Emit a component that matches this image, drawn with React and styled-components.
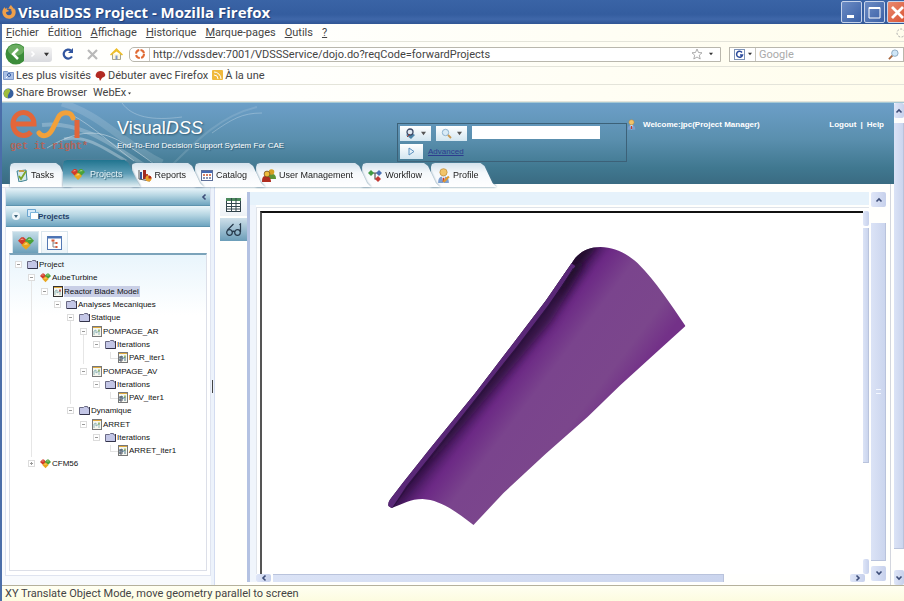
import React, { useState } from "react";
import styled, { createGlobalStyle, css } from "styled-components";
import { FaFirefoxBrowser } from "react-icons/fa";

const GlobalStyle = createGlobalStyle`
  * {
    box-sizing: border-box;
  }

  body {
    margin: 0;
    overflow: hidden;
    background-color: #fffffd;
    font-family: "Liberation Sans", Arial, sans-serif;
  }

  button, input {
    font-family: inherit;
    padding: 0;
    margin: 0;
    border: none;
    background: none;
  }

  ul {
    list-style: none;
    margin: 0;
    padding: 0;
  }

  a {
    color: inherit;
    text-decoration: none;
  }

  svg {
    display: block;
    flex-shrink: 0;
  }
`;

/* ---------- browser window ---------- */

const SCWindow = styled.div`
  min-height: 100vh;
  display: flex;
  flex-direction: column;
  border-left: 2px solid #4b6ea9;
`;

const SCTitleBar = styled.header`
  height: 24px;
  margin-left: -2px;
  display: flex;
  align-items: center;
  gap: 2px;
  padding-left: 2px;
  background: linear-gradient(#3a64a6, #345d9f 60%, #3f67a9 80%, #2f5594);
  overflow: hidden;
`;

const SCTitle = styled.h1`
  flex: 1;
  margin: 0;
  font-family: "Open Sans", sans-serif;
  font-size: 15px;
  font-weight: 700;
  line-height: 22px;
  color: #fff;
  white-space: nowrap;
  text-shadow: 1px 1px 1px #1f3f78;
`;

const SCWindowButtons = styled.div`
  display: flex;
  gap: 2px;
  margin-right: -4px;
`;

const SCWindowButton = styled.button`
  width: 21px;
  height: 22px;
  display: grid;
  place-items: center;
  border: 1px solid #c6d3ea;
  border-radius: 2px;
  background: ${(props) =>
    props.$close
      ? "linear-gradient(135deg, #e88a70, #d9502f)"
      : "linear-gradient(135deg, #6c8cc4, #3a60a6)"};
`;

const SCChrome = styled.div`
  font-family: Roboto, sans-serif;
  font-size: 11px;
  line-height: 16px;
  color: #444;
  background: linear-gradient(100deg, #fffffd 30%, #fffdec);
  white-space: nowrap;
`;

const SCBar = styled.div`
  display: flex;
  align-items: center;
  height: ${(props) => props.$height || 18}px;
  gap: ${(props) => props.$gap || 3}px;
  padding-left: ${(props) => props.$left || 1}px;
  border-bottom: 1px solid #e4e4da;
  overflow: hidden;
`;

const SCSpacer = styled.span`
  flex: 1;
`;

const SCGap = styled.span`
  flex: 0 0 2px;
`;

const SCBarLink = styled.a`
  display: flex;
  align-items: center;
  gap: 2px;
`;

const SCIconButton = styled.button`
  display: grid;
  place-items: center;
  height: 22px;
  width: ${(props) => props.$width || 20}px;
`;

const SCHistory = styled.div`
  display: flex;
  align-items: center;
  width: 50px;
  height: 22px;
`;

const SCForward = styled.button`
  display: flex;
  align-items: center;
  justify-content: space-between;
  width: 28px;
  height: 15px;
  margin-left: -3px;
  padding: 0 3px 0 5px;
  border-radius: 0 3px 3px 0;
  background: linear-gradient(#f4f4f4, #d9dade);
`;

const SCField = styled.label`
  display: flex;
  align-items: center;
  height: 15px;
  flex: ${(props) => props.$grow} 1 0;
  min-width: 0;
  gap: 3px;
  padding: 0 4px;
  border: 1px solid #b9b7ad;
  border-radius: ${(props) => (props.$round ? "5px 0 0 5px" : "0")};
  background-color: #fff;
`;

const SCFieldInput = styled.input`
  flex: 1;
  min-width: 0;
  height: 13px;
  padding-left: 3px;
  border-left: 1px solid #c9c7be;
  font-size: 11px;
  color: #444;
  outline: none;

  &::placeholder {
    color: #aaa;
    opacity: 1;
  }
`;

const SCStatusBar = styled.footer`
  height: 16px;
  padding-left: 3px;
  border-top: 1px solid #b5b19c;
  background: linear-gradient(#fffff2, #fdfce0);
  font-family: Roboto, sans-serif;
  font-size: 11px;
  line-height: 15px;
  color: #444;
`;

const SCViewport = styled.div`
  flex: 1;
  display: flex;
  border-top: 1px solid #a5c8d4;
  min-height: 0;
`;

const SCPage = styled.div`
  flex: 1;
  min-width: 0;
  display: flex;
  flex-direction: column;
`;

/* ---------- application header ---------- */

const SCHeader = styled.header`
  position: relative;
  height: 81px;
  display: flex;
  flex-direction: column;
  justify-content: space-between;
  background: linear-gradient(#6c9fc8, #5a8fae 45%, #407890 80%, #3a6b82);
  color: #fff;
`;

const SCSwoosh = styled.svg`
  position: absolute;
  top: 0;
  left: 0;
`;

const SCHeaderTop = styled.div`
  position: relative;
  height: 57px;
  display: flex;
  align-items: flex-start;
  padding-left: 8px;
`;

const SCBrand = styled.div`
  width: 107px;
  padding-top: 5px;
`;

const SCTagline = styled.p`
  margin: 0;
  font-family: "Liberation Mono", monospace;
  font-size: 10px;
  font-weight: 700;
  line-height: 14px;
  color: #b0655a;
`;

const SCProduct = styled.div`
  width: 280px;
  padding-top: 13px;
`;

const SCProductName = styled.h2`
  margin: 0;
  font-size: 18px;
  font-weight: 400;
  line-height: 24px;
  text-shadow: 1px 1px 2px #2d5a72;
`;

const SCProductNote = styled.p`
  margin: 0;
  font-size: 8px;
  line-height: 12px;
  text-shadow: 1px 1px 1px #2d5a72;
`;

const SCSearch = styled.form`
  width: 230px;
  height: 39px;
  margin-top: 20px;
  padding: 2px;
  display: flex;
  flex-wrap: wrap;
  align-items: flex-start;
  gap: 3px 5px;
  border: 1px solid #3c6178;
`;

const SCSearchButton = styled.button`
  width: ${(props) => props.$width || 31}px;
  height: 15px;
  display: flex;
  align-items: center;
  justify-content: space-evenly;
  background: linear-gradient(#fff, #d3e6f0);
`;

const SCSearchInput = styled.input`
  width: 128px;
  height: 13px;
  background-color: #fff;
  font-size: 9px;
`;

const SCAdvanced = styled.a`
  font-size: 8px;
  line-height: 15px;
  color: #2c3c8e;
  text-decoration: underline;
`;

const SCAccount = styled.div`
  flex: 1;
  display: flex;
  align-items: center;
  gap: 7px;
  margin-top: 16px;
  padding: 0 10px 0 0;
  font-size: 8px;
  font-weight: 700;
  line-height: 11px;
`;

const SCAccountLinks = styled.span`
  display: flex;
  gap: 4px;
`;

const SCTabs = styled.nav`
  position: relative;
  display: flex;
  align-items: flex-end;
  height: 27px;
  padding-left: 8px;
`;

const SCTabShadow = styled.div`
  position: relative;
  z-index: ${(props) => props.$order};
  margin-right: -9px;
  filter: drop-shadow(0 0 1px #5b8298);
`;

const SCTab = styled.button`
  display: flex;
  align-items: center;
  gap: 3px;
  height: 24px;
  padding: 0 18px 0 6px;
  font-size: 9px;
  color: #222;
  background: linear-gradient(#d4e2ec, #f4f8fb 40%, #fff);
  clip-path: polygon(
    0 4px,
    1px 1px,
    4px 0,
    calc(100% - 16px) 0,
    calc(100% - 12px) 3px,
    calc(100% - 4px) 20px,
    100% 100%,
    0 100%
  );

  ${(props) =>
    props.$active &&
    css`
      height: 27px;
      gap: 5px;
      padding-left: 8px;
      color: #e9f3f7;
      text-shadow: 1px 1px 1px #2f6075;
      background: linear-gradient(#20748f, #5d9db6 50%, #e5f1f5);
    `}
`;

/* ---------- workspace ---------- */

const SCWorkspace = styled.main`
  flex: 1;
  display: flex;
  min-height: 0;
  padding-top: 3px;
  border-right: 1px solid #d3d6de;
  margin-right: 3px;
`;

const SCSide = styled.aside`
  width: 209px;
  display: flex;
  flex-direction: column;
  padding: 0 0 9px 3px;
  border-top: 1px solid #e3e6ee;
  background-color: #f8fafd;
`;

const SCSideInner = styled.div`
  flex: 1;
  display: flex;
  flex-direction: column;
  background-color: #fff;
  border: solid #dfe4f0;
  border-width: 0 1px 1px;
`;

const SCSideBar = styled.div`
  height: ${(props) => props.$height}px;
  display: flex;
  align-items: center;
  gap: 7px;
  padding: 0 2px 0 6px;
  justify-content: ${(props) => (props.$end ? "flex-end" : "flex-start")};
  border-bottom: 1px solid #5d93ae;
  background: linear-gradient(#eaf5fa, #b5d5e2 45%, #6fa5c0);
`;

const SCSideTitle = styled.h3`
  margin: 0 0 0 -8px;
  font-size: 8px;
  font-weight: 700;
  color: #1f3d68;
`;

const SCSideTabs = styled.div`
  display: flex;
  gap: 2px;
  padding: 4px 0 0 6px;
`;

const SCSideTab = styled.button`
  width: 27px;
  height: 22px;
  display: grid;
  place-items: center;
  border: solid #dbe7ee;
  border-width: 1px 1px 0;
  background: ${(props) =>
    props.$active ? "linear-gradient(#c5dde8, #6c9fb9)" : "linear-gradient(#fff, #eaf3f8)"};
`;

const SCTreeBox = styled.div`
  flex: 1;
  margin: 0 3px 4px;
  padding: 3px 0 0 4px;
  border: 1px solid #dcdfe8;
  border-top: 2px solid #7ba3ba;
  background: linear-gradient(#e9f5fc, #fff 60px);
`;

const SCNode = styled.li`
  background: linear-gradient(#e6e6e6, #e6e6e6) 4px 6px / 1px 100% no-repeat;

  &:last-child {
    background: none;
  }

  & > ul {
    padding-left: 13px;
  }
`;

const SCNodeRow = styled.div`
  display: flex;
  align-items: center;
  height: ${(props) => (props.$tall ? 14 : 13)}px;
  font-size: 8px;
  color: #111;
`;

const SCToggle = styled.button`
  width: 7px;
  height: 7px;
  margin: 0 5px 0 1px;
  display: grid;
  place-items: center;
  border: 1px solid #dcdcdc;
  background-color: #fff;
`;

const SCElbow = styled.span`
  width: 8px;
  height: 7px;
  margin: -5px 0 0 5px;
  border: solid #e3e3e3;
  border-width: 0 0 1px 1px;
`;

const SCNodeLabel = styled.span`
  margin-left: 1px;
  line-height: 11px;
  padding-right: 1px;
  white-space: nowrap;
  background-color: ${(props) => (props.$selected ? "#c9cfe6" : "transparent")};
`;

const SCSplitter = styled.div`
  width: 4px;
  display: grid;
  place-items: center;
  border-right: 1px solid #d3dcf0;
  background-color: #edf3fb;
`;

const SCGrip = styled.span`
  width: 1px;
  height: 13px;
  background-color: #444;
`;

const SCTools = styled.div`
  width: 32px;
  display: flex;
  flex-direction: column;
  align-items: flex-end;
  gap: 2px;
  padding: 6px 0 0 4px;
`;

const SCTool = styled.button`
  width: 27px;
  height: 23px;
  display: grid;
  place-items: center;
  background: ${(props) =>
    props.$active ? "linear-gradient(#cfe0ea, #6b9db8)" : "linear-gradient(#fff, #edf2f6)"};
`;

const SCViewer = styled.section`
  flex: 1;
  min-width: 0;
  display: flex;
  flex-direction: column;
  margin: 5px 2px 3px 0;
  border-left: 3px solid #b4c2e2;
  padding-left: 6px;
  background: linear-gradient(#e6f2fb, #e6f2fb) 0 0 / 100% 13px no-repeat,
    linear-gradient(#f0f5fc, #f0f5fc) 0 0 / 6px 100% no-repeat;
`;

const SCFrame = styled.div`
  flex: 1;
  display: flex;
  margin-top: 15px;
  padding: 3px 0 0 3px;
  border: solid #e0e4ea;
  border-width: 1px 0 0 1px;
  background-color: #fff;
`;

const SCCanvas = styled.div`
  flex: 1;
  min-width: 0;
  min-height: 0;
  contain: size;
  display: flex;
  border: solid #111;
  border-width: 2px 0 0 2px;
  border-left-color: #555;
`;

const SCModel = styled.svg`
  flex: 1;
  min-width: 0;
  width: 100%;
  height: 100%;
`;

/* ---------- scrollbars ---------- */

const SCScroll = styled.div`
  display: flex;
  flex-direction: ${(props) => (props.$row ? "row" : "column")};
  ${(props) => (props.$row ? "height" : "width")}: ${(props) => props.$size}px;
  gap: 2px;
  overflow: hidden;
`;

const SCScrollButton = styled.button`
  flex: 0 0 15px;
  display: grid;
  place-items: center;
  border-radius: 2px;
  background: linear-gradient(90deg, #dfe6f8, #c7d1ec);
`;

const SCThumb = styled.div`
  flex: ${(props) => props.$grow} 1 0;
  border: 1px solid #b9c3dc;
  border-width: ${(props) => (props.$row ? "1px 1px 0 0" : "0 1px 1px 0")};
  display: grid;
  place-items: center;
  background: linear-gradient(90deg, #dbe3f6, #cbd5ee);
`;

const SCThumbMark = styled.span`
  width: 5px;
  height: 5px;
  border: solid #f5f8ff;
  border-width: 1px 0;
`;

const SCTrack = styled.div`
  flex: ${(props) => props.$grow} 1 0;
`;

const SCViewerScroll = styled.div`
  display: flex;
  padding: 5px 4px 4px 0;
`;

/* ---------- icons ---------- */

const Chevron = ({ turn = 0, color = "#3d4d78" }) => (
  <svg width="8" height="8" viewBox="0 0 8 8">
    <path
      d="M1.5 5.5 4 3l2.500 2.500"
      fill="none"
      stroke={color}
      strokeWidth="1.600"
      transform={`rotate(${turn} 4 4)`}
    />
  </svg>
);

const Caret = ({ size = 5, color = "#333" }) => (
  <svg width={size} height={size} viewBox="0 0 6 6">
    <path d="M0 1h6L3 5z" fill={color} />
  </svg>
);

const Lens = ({ size = 12 }) => (
  <svg width={size} height={size} viewBox="0 0 12 12">
    <path d="m1 11 4-4" stroke="#a9683f" strokeWidth="2" />
    <circle cx="7.500" cy="4.500" r="3.500" fill="#cfe6f7" stroke="#8aa6bd" />
  </svg>
);

const Gems = ({ size = 11 }) => (
  <svg width={size} height={size} viewBox="0 0 14 12">
    <path d="m0 4 3-3h2l3 3-4 4z" fill="#d23a2a" />
    <path d="m1.500 3.500 2-1.500 2 1z" fill="#f2a08e" />
    <path d="m6 4 3-3h2l3 3-4 4z" fill="#49a23a" />
    <path d="m8 3.500 2-1.500 2 1z" fill="#b3e09a" />
    <path d="m3 8 3-3h2l3 3-4 4z" fill="#e8a720" />
    <path d="m5 7.500 2-1.500 2 1z" fill="#ffe28a" />
  </svg>
);

const Folder = () => (
  <svg width="11" height="9" viewBox="0 0 11 9">
    <path d="M.5 8.500v-7h4l1-1h3l.5 1.500h1.500v6.500z" fill="#c3c6e6" stroke="#6a6a84" />
    <path d="M10.500 1v7.500H1" fill="none" stroke="#33334a" />
  </svg>
);

const Model = ({ leaf, dark }) => (
  <svg width="10" height="11" viewBox="0 0 10 11">
    <rect x=".5" y=".5" width="9" height="10" fill="#f5f6ee" stroke={dark ? "#333" : "#777"} />
    <path d="M1 1.500h8" stroke="#e0aa3e" />
    <path d="M2 9V5l2-1v3l3-2v4" fill="none" stroke={leaf ? "#4c7690" : "#8fb5b8"} />
    <path d="M7 3.500v2" stroke={dark ? "#b7342b" : "#86ab52"} strokeWidth="1.500" />
    {leaf && <path d="M1 5h4M3 5v5M1 8h4" stroke="#5b5c6c" />}
  </svg>
);

const Person = ({ size = 9, pen }) => (
  <svg width={size} height={size + 2} viewBox="0 0 12 14">
    <path d="M1 14c0-5 2-6 5-6s5 1 5 6z" fill="#7d9fd0" />
    <path d="m4.500 8 1.500 6 1.500-6z" fill="#fff" />
    <path d="M6 9v4" stroke="#cf3b2c" strokeWidth="1.500" />
    <circle cx="6" cy="4" r="3.400" fill="#f1c46a" stroke="#b9842e" strokeWidth=".6" />
    {pen && <path d="m6 13 5-5" stroke="#e09a2e" strokeWidth="2" />}
  </svg>
);

const TasksIcon = () => (
  <svg width="12" height="13" viewBox="0 0 12 13">
    <path d="m1 2 9-1 1 10-8 2z" fill="#d6e9ec" stroke="#3f8292" />
    <path d="M3 1h5v2H3z" fill="#c39b4a" />
    <path d="m3 7 2 3 5-8" fill="none" stroke="#7ba62c" strokeWidth="1.800" />
  </svg>
);

const ReportsIcon = () => (
  <svg width="14" height="13" viewBox="0 0 14 13">
    <path d="M1 1v9l11 2" fill="none" stroke="#555" />
    <path d="M2 3h2v7H2z" fill="#34599b" />
    <path d="M5 1h3v9H5z" fill="#9f2b23" />
    <path d="M8 5h2v6H8z" fill="#c4472d" />
    <circle cx="10.500" cy="9.500" r="3" fill="#e9a32b" />
    <path d="M10.500 9.500V6.500a3 3 0 0 1 3 3z" fill="#b0271e" />
  </svg>
);

const CatalogIcon = () => (
  <svg width="12" height="11" viewBox="0 0 12 11">
    <rect x=".5" y=".5" width="11" height="10" fill="#fff" stroke="#5d6f99" />
    <path d="M1 2h10" stroke="#4568b0" strokeWidth="2" />
    <path d="M2 5h2M5 5h2M8 5h2" stroke="#c9542e" strokeWidth="1.500" />
    <path d="M2 8h2M5 8h2M8 8h2" stroke="#61729c" strokeWidth="1.500" />
  </svg>
);

const UsersIcon = () => (
  <svg width="14" height="13" viewBox="0 0 14 13">
    <path d="M6 10c0-4 1-5 4-5s4 2 4 5z" fill="#5c9436" />
    <circle cx="9.500" cy="3" r="2.800" fill="#d5a022" />
    <path d="M0 13c0-5 1-6 4-6s5 2 5 6z" fill="#b02d20" />
    <circle cx="5" cy="5" r="2.900" fill="#edbc3c" stroke="#67401a" strokeWidth=".7" />
  </svg>
);

const WorkflowIcon = () => (
  <svg width="14" height="13" viewBox="0 0 14 13">
    <path d="M3 4h8M7 4v6h4" fill="none" stroke="#555" strokeWidth="1.200" />
    <path d="m0 4 3-3 3 3-3 3z" fill="#3f9a42" />
    <path d="m8 4 3-3 3 3-3 3z" fill="#4a72b5" />
    <path d="m7 10 3-3 3 3-3 3z" fill="#c43a35" />
  </svg>
);

const Logo = () => (
  <svg width="72" height="32" viewBox="0 0 72 32" fill="none" strokeWidth="5">
    <path d="M4 16h20a10.500 11.500 0 1 0-3 8" stroke="#e2663a" />
    <path
      d="M29 25c3 4 9 4 13-3l6-12c3-7 13-7 15 0"
      stroke="#f2a13a"
      strokeLinecap="round"
    />
    <path d="M67 12v18" stroke="#e2663a" />
  </svg>
);

const Blade = () => (
  <SCModel viewBox="262 213 600 361" role="img" aria-label="Reactor blade">
    <defs>
      <linearGradient
        id="skin"
        gradientUnits="userSpaceOnUse"
        x1="481"
        y1="386"
        x2="575"
        y2="457"
      >
        <stop offset="0" stopColor="#35134a" />
        <stop offset=".08" stopColor="#531e6c" />
        <stop offset=".18" stopColor="#6c2985" />
        <stop offset=".4" stopColor="#7a448d" />
        <stop offset=".8" stopColor="#7b468c" />
        <stop offset="1" stopColor="#733188" />
      </linearGradient>
      <clipPath id="outline">
        <path d="M388 506C387 502 390 499 393 495L403 482 430 448 474 394 513 343 545 301 572 262C578 252 588 247 600 247 614 247 627 254 637 263 656 282 670 304 685 326L653 355 620 385 587 417 545 454 503 493 473 525C455 511 440 500 422 499 410 499 402 504 391 508z" />
      </clipPath>
      <filter id="soft" x="-20%" y="-20%" width="140%" height="140%">
        <feGaussianBlur stdDeviation="5" />
      </filter>
    </defs>
    <g clipPath="url(#outline)">
      <path d="M380 240h310v290H380z" fill="url(#skin)" />
      <path
        d="M560 275c5-22 18-34 38-34l-6 12c-10 8-20 24-36 48z"
        fill="#200b2c"
        filter="url(#soft)"
        opacity=".9"
      />
      <path
        d="M391 508 570 264l16-2-36 60L400 500z"
        fill="#1c0927"
        filter="url(#soft)"
        opacity=".6"
      />
      <path
        d="M388 507 403 484 430 450 513 345 545 303 572 264"
        fill="none"
        stroke="#5a2878"
        strokeWidth="7"
      />
      <path d="M392 508 407 487 434 453 517 348 549 306 573 268" fill="none" stroke="#2c1140" />
    </g>
  </SCModel>
);

/* ---------- data ---------- */

const menuItems = ["Fichier", "Édition", "Affichage", "Historique", "Marque-pages", "Outils", "?"];
const accessKeys = [0, 6, 0, 0, 0, 0, 0];

const tabItems = [
  { name: "Tasks", icon: <TasksIcon /> },
  { name: "Projects", icon: <Gems size={14} /> },
  { name: "Reports", icon: <ReportsIcon /> },
  { name: "Catalog", icon: <CatalogIcon /> },
  { name: "User Management", icon: <UsersIcon /> },
  { name: "Workflow", icon: <WorkflowIcon /> },
  { name: "Profile", icon: <Person size={13} pen /> },
];

const pompage = (name, iter) => ({
  name,
  kind: "model",
  children: [
    { name: "Iterations", kind: "folder", children: [{ name: iter, kind: "leaf" }] },
  ],
});

const projectTree = [
  {
    name: "Project",
    kind: "folder",
    children: [
      {
        name: "AubeTurbine",
        kind: "project",
        children: [
          {
            name: "Reactor Blade Model",
            kind: "blade",
            children: [
              {
                name: "Analyses Mecaniques",
                kind: "folder",
                children: [
                  {
                    name: "Statique",
                    kind: "folder",
                    children: [
                      pompage("POMPAGE_AR", "PAR_iter1"),
                      pompage("POMPAGE_AV", "PAV_iter1"),
                    ],
                  },
                  {
                    name: "Dynamique",
                    kind: "folder",
                    children: [pompage("ARRET", "ARRET_iter1")],
                  },
                ],
              },
            ],
          },
        ],
      },
      { name: "CFM56", kind: "project", closed: true, children: [] },
    ],
  },
];

const nodeIcons = {
  folder: <Folder />,
  project: <Gems size={11} />,
  blade: <Model dark />,
  model: <Model />,
  leaf: <Model leaf />,
};

/* ---------- components ---------- */

function TreeNode({ node, selected }) {
  const [open, setOpen] = useState(!node.closed);

  return (
    <SCNode>
      <SCNodeRow $tall={node.kind === "model" || node.kind === "blade"}>
        {node.children ? (
          <SCToggle aria-label={`Toggle ${node.name}`} onClick={() => setOpen(!open)}>
            <svg width="5" height="5" viewBox="0 0 5 5">
              <path d={open ? "M1 2.500h3" : "M1 2.500h3M2.500 1v3"} stroke="#999" />
            </svg>
          </SCToggle>
        ) : (
          <SCElbow />
        )}
        {nodeIcons[node.kind]}
        <SCNodeLabel $selected={node.name === selected}>{node.name}</SCNodeLabel>
      </SCNodeRow>
      {open && node.children && node.children.length > 0 && (
        <ul>
          {node.children.map((child) => (
            <TreeNode key={child.name} node={child} selected={selected} />
          ))}
        </ul>
      )}
    </SCNode>
  );
}

function VerticalScroll({ size, before, thumb, after, marked }) {
  return (
    <SCScroll $size={size}>
      <SCScrollButton aria-label="Scroll up">
        <Chevron />
      </SCScrollButton>
      <SCTrack $grow={before} />
      <SCThumb $grow={thumb}>{marked && <SCThumbMark />}</SCThumb>
      <SCTrack $grow={after} />
      <SCScrollButton aria-label="Scroll down">
        <Chevron turn={180} />
      </SCScrollButton>
    </SCScroll>
  );
}

function BrowserChrome() {
  return (
    <SCChrome>
      <SCBar $left={4} $gap={9}>
        {menuItems.map((item, i) => (
          <a href="#menu" key={item}>
            {item.slice(0, accessKeys[i])}
            <u>{item[accessKeys[i]]}</u>
            {item.slice(accessKeys[i] + 1)}
          </a>
        ))}
        <SCSpacer />
        <svg width="8" height="10" viewBox="0 0 8 10">
          <circle cx="5" cy="5" r="4" fill="none" stroke="#aaa" strokeDasharray="2 1.500" />
        </svg>
      </SCBar>
      <SCBar $height={25} $left={3}>
        <SCHistory>
          <SCIconButton $width={22} aria-label="Back">
            <svg width="22" height="22" viewBox="0 0 22 22">
              <circle cx="11" cy="11" r="10.500" fill="#3c8c3a" />
              <ellipse cx="11" cy="7" rx="8" ry="5.500" fill="#7dba70" opacity=".7" />
              <path d="m13 6-5 5 5 5" fill="none" stroke="#fff" strokeWidth="2.500" />
            </svg>
          </SCIconButton>
          <SCForward aria-label="Forward">
            <Chevron turn={90} color="#fff" />
            <Caret />
          </SCForward>
        </SCHistory>
        <SCIconButton aria-label="Reload">
          <svg width="12" height="12" viewBox="0 0 12 12">
            <path d="M10 8.500A4.500 4.500 0 1 1 9 2.500" fill="none" stroke="#31559f" strokeWidth="2.200" />
            <path d="M11 0v5H6z" fill="#31559f" />
          </svg>
        </SCIconButton>
        <SCIconButton $width={22} aria-label="Stop">
          <svg width="11" height="11" viewBox="0 0 11 11">
            <path d="m1 1 9 9m0-9-9 9" stroke="#b9b9b9" strokeWidth="2.200" />
          </svg>
        </SCIconButton>
        <SCIconButton aria-label="Home">
          <svg width="13" height="12" viewBox="0 0 13 12">
            <path d="M2.500 6v5.500h8V6" fill="#fdf6dc" stroke="#a9a58c" />
            <path d="M0 6.500 6.500 0 13 6.500l-1 1-5.500-4-5.500 4z" fill="#eebf2b" />
            <path d="M5.500 7.500h2v4h-2z" fill="#7f98c8" />
          </svg>
        </SCIconButton>
        <SCField $grow={600} $round>
          <svg width="12" height="12" viewBox="0 0 12 12">
            <circle cx="6" cy="6" r="4" fill="none" stroke="#e06a35" strokeWidth="2" strokeDasharray="5 1.300" />
          </svg>
          <SCFieldInput
            aria-label="Address"
            defaultValue="http://vdssdev:7001/VDSSService/dojo.do?reqCode=forwardProjects"
          />
          <svg width="12" height="12" viewBox="0 0 12 12">
            <path
              d="m6 1 1.500 3.500 3.500.3-2.700 2.400.9 3.800L6 9l-3.200 2 .9-3.800L1 4.800l3.500-.3z"
              fill="#fff"
              stroke="#999"
              strokeWidth=".8"
            />
          </svg>
          <SCIconButton $width={10} aria-label="Address history">
            <Caret size={4} />
          </SCIconButton>
        </SCField>
        <SCGap />
        <SCField $grow={170}>
          <svg width="11" height="11" viewBox="0 0 11 11">
            <rect x=".5" y=".5" width="10" height="10" fill="#fff" stroke="#7e94b8" />
            <path d="M8 3.500A3 3 0 1 0 8.500 6H6" fill="none" stroke="#2b4a9b" strokeWidth="1.500" />
          </svg>
          <Caret size={4} />
          <SCFieldInput aria-label="Web search" placeholder="Google" />
          <Lens size={11} />
        </SCField>
      </SCBar>
      <SCBar $gap={4}>
        <SCBarLink href="#visited">
          <svg width="11" height="11" viewBox="0 0 11 11">
            <path d="M.5 9.500v-8h4l1 1h5v7z" fill="#a9c0e6" stroke="#7d98c8" />
            <path d="m3 8 2-2" stroke="#fff" />
            <circle cx="6" cy="5" r="1.600" fill="none" stroke="#3d62a5" />
          </svg>
          Les plus visités
        </SCBarLink>
        <SCBarLink href="#start">
          <svg width="11" height="11" viewBox="0 0 11 11">
            <path d="M1 4C2 0 9 0 10 4c1 2-1 3-3 4L5 11 4 8C1 8 0 6 1 4z" fill="#b22a22" />
          </svg>
          Débuter avec Firefox
        </SCBarLink>
        <SCBarLink href="#news">
          <svg width="11" height="11" viewBox="0 0 11 11">
            <rect width="11" height="10" rx="1" fill="#f0b93c" />
            <path d="M2 5a4 4 0 0 1 4 4M2 2a7 7 0 0 1 7 7" fill="none" stroke="#fff" />
          </svg>
          À la une
        </SCBarLink>
      </SCBar>
      <SCBar $height={17} $gap={6}>
        <SCBarLink href="#share">
          <svg width="11" height="11" viewBox="0 0 11 11">
            <circle cx="5.500" cy="5.500" r="5" fill="#37609f" />
            <path d="M1 4c2-4 5-4 6-2S4 6 5 10C2 10 0 7 1 4z" fill="#9fbe3b" />
          </svg>
          Share Browser
        </SCBarLink>
        <SCBarLink href="#webex">
          WebEx
          <Caret size={3} />
        </SCBarLink>
      </SCBar>
    </SCChrome>
  );
}

function AppHeader() {
  const [active, setActive] = useState("Projects");

  return (
    <SCHeader>
      <SCSwoosh width="300" height="81" viewBox="0 0 300 81" fill="none" stroke="#fff">
        <path d="M60 0c40 12 60 40 100 60" strokeWidth="7" opacity=".14" />
        <path d="M40 22c40-4 70 20 105 42" strokeWidth="4" opacity=".22" />
        <path d="M45 45c50-30 70-10 110 18" strokeWidth="1" opacity=".4" />
        <path d="M62 36c20-4 36 6 62 22" strokeWidth="3" opacity=".3" />
        <path d="M70 12c20 10 45 34 62 46" opacity=".35" />
        <path d="M120 0c10 14 30 18 60 14M210 30c20-14 30-20 50-20" opacity=".25" />
        <path d="M170 62c25-25 50-50 85-58" strokeWidth="2" opacity=".12" />
      </SCSwoosh>
      <SCHeaderTop>
        <SCBrand>
          <Logo />
          <SCTagline>get it right*</SCTagline>
        </SCBrand>
        <SCProduct>
          <SCProductName>
            Visual<em>DSS</em>
          </SCProductName>
          <SCProductNote>End-To-End Decision Support System For CAE</SCProductNote>
        </SCProduct>
        <SCSearch onSubmit={(e) => e.preventDefault()}>
          <SCSearchButton type="button" aria-label="Search scope">
            <svg width="11" height="11" viewBox="0 0 11 11">
              <path d="m1 7 4-3 5 3-4 4z" fill="#4b84a8" />
              <circle cx="5" cy="4" r="3" fill="#dfe9f2" stroke="#3d4a66" strokeWidth="1.300" />
              <path d="m2 9 3-3" stroke="#a5403a" />
            </svg>
            <Caret color="#555" />
          </SCSearchButton>
          <SCSearchButton type="button" aria-label="Search type">
            <svg width="11" height="11" viewBox="0 0 11 11">
              <circle cx="4.500" cy="4.500" r="3.200" fill="#d9ebf7" stroke="#8fb3cf" />
              <path d="m7 7 3 3" stroke="#c9984f" strokeWidth="1.800" />
            </svg>
            <Caret color="#555" />
          </SCSearchButton>
          <SCSearchInput aria-label="Search projects" />
          <SCSearchButton $width={23} aria-label="Run search">
            <svg width="7" height="9" viewBox="0 0 7 9">
              <path d="m1 1 5 3.500-5 3.500z" fill="#e3f0f8" stroke="#5c92c0" />
            </svg>
          </SCSearchButton>
          <SCAdvanced href="#advanced">Advanced</SCAdvanced>
        </SCSearch>
        <SCAccount>
          <Person size={9} />
          <span>Welcome:jpc(Project Manager)</span>
          <SCSpacer />
          <SCAccountLinks>
            <a href="#logout">Logout</a>
            <span>|</span>
            <a href="#help">Help</a>
          </SCAccountLinks>
        </SCAccount>
      </SCHeaderTop>
      <SCTabs>
        {tabItems.map((tab, i) => (
          <SCTabShadow key={tab.name} $order={active === tab.name ? 10 : 8 - i}>
            <SCTab $active={active === tab.name} onClick={() => setActive(tab.name)}>
              {tab.icon}
              {tab.name}
            </SCTab>
          </SCTabShadow>
        ))}
      </SCTabs>
    </SCHeader>
  );
}

function SidePanel() {
  return (
    <SCSide>
      <SCSideInner>
        <SCSideBar $height={18} $end>
          <Chevron turn={270} />
        </SCSideBar>
        <SCSideBar $height={21}>
          <svg width="8" height="8" viewBox="0 0 8 8">
            <circle cx="4" cy="4" r="4" fill="#eef6fa" />
            <path d="M2 3h4L4 6z" fill="#40657c" />
          </svg>
          <svg width="12" height="14" viewBox="0 0 12 14">
            <path d="M.5.500h8v7h-8z" fill="#d6eaf8" stroke="#6aa5d0" />
            <path d="M3.500 3.500h8v7h-8z" fill="#fff" stroke="#7db6dc" />
          </svg>
          <SCSideTitle>Projects</SCSideTitle>
        </SCSideBar>
        <SCSideTabs>
          <SCSideTab $active aria-label="Projects">
            <Gems size={16} />
          </SCSideTab>
          <SCSideTab aria-label="Hierarchy">
            <svg width="15" height="14" viewBox="0 0 15 14">
              <rect x=".5" y=".5" width="14" height="13" fill="#fff" stroke="#5479b4" />
              <path d="M1 1.500h13" stroke="#4a73b5" strokeWidth="2" />
              <path d="M6 4v7h3M6 7h3" fill="none" stroke="#888" />
              <path d="M4.500 3.500h3v2h-3zM8.500 6h2v2h-2zM8.500 10h2v2h-2z" fill="#d85a36" />
            </svg>
          </SCSideTab>
        </SCSideTabs>
        <SCTreeBox>
          <ul>
            {projectTree.map((node) => (
              <TreeNode key={node.name} node={node} selected="Reactor Blade Model" />
            ))}
          </ul>
        </SCTreeBox>
      </SCSideInner>
    </SCSide>
  );
}

function Viewer() {
  return (
    <SCViewer>
      <SCFrame>
        <SCCanvas>
          <Blade />
        </SCCanvas>
        <SCScroll $size={6}>
          <SCScrollButton aria-label="Scroll model up" />
          <SCThumb $grow={240} />
          <SCTrack $grow={95} />
          <SCScrollButton aria-label="Scroll model down" />
        </SCScroll>
      </SCFrame>
      <SCScroll $row $size={8}>
        <SCScrollButton aria-label="Scroll model left">
          <Chevron turn={270} />
        </SCScrollButton>
        <SCThumb $row $grow={448} />
        <SCTrack $grow={122} />
        <SCScrollButton aria-label="Scroll model right">
          <Chevron turn={90} />
        </SCScrollButton>
        <SCGap />
      </SCScroll>
    </SCViewer>
  );
}

function App() {
  return (
    <SCWindow>
      <GlobalStyle />
      <SCTitleBar>
        <FaFirefoxBrowser size={14} color="#f0a04a" />
        <SCTitle>VisualDSS Project - Mozilla Firefox</SCTitle>
        <SCWindowButtons>
          <SCWindowButton aria-label="Minimize">
            <svg width="13" height="13" viewBox="0 0 13 13">
              <path d="M2 10.500h7" stroke="#fff" strokeWidth="3" />
            </svg>
          </SCWindowButton>
          <SCWindowButton aria-label="Maximize">
            <svg width="13" height="13" viewBox="0 0 13 13">
              <path d="M1 1.500h11v10.500H1z" fill="none" stroke="#fff" />
              <path d="M1 2h11" stroke="#fff" strokeWidth="2" />
            </svg>
          </SCWindowButton>
          <SCWindowButton $close aria-label="Close">
            <svg width="13" height="13" viewBox="0 0 13 13">
              <path d="m1 1 11 11m0-11L1 12" stroke="#fff" strokeWidth="2.800" />
            </svg>
          </SCWindowButton>
        </SCWindowButtons>
      </SCTitleBar>
      <BrowserChrome />
      <SCViewport>
        <SCPage>
          <AppHeader />
          <SCWorkspace>
            <SidePanel />
            <SCSplitter>
              <SCGrip />
            </SCSplitter>
            <SCTools>
              <SCTool aria-label="Table view">
                <svg width="15" height="14" viewBox="0 0 15 14">
                  <rect x=".5" y=".5" width="14" height="13" fill="#fff" stroke="#2f4148" />
                  <path d="M0 1.500h15" stroke="#4c8a5c" strokeWidth="3" />
                  <path d="M0 5.500h15M0 8.500h15M0 11h15M5.500 0v14M10 0v14" stroke="#33474f" />
                </svg>
              </SCTool>
              <SCTool $active aria-label="3D view">
                <svg width="16" height="14" viewBox="0 0 16 14" fill="none" stroke="#26384a" strokeWidth="1.200">
                  <circle cx="3.500" cy="9.500" r="2.800" />
                  <circle cx="11.500" cy="9.500" r="2.800" />
                  <path d="M6 9c1-1 2-1 3 0M1.500 7l6-6M14.500 9V1l-1 1" />
                </svg>
              </SCTool>
            </SCTools>
            <Viewer />
            <SCViewerScroll>
              <VerticalScroll size={15} before={12} thumb={340} after={1} marked />
            </SCViewerScroll>
          </SCWorkspace>
        </SCPage>
        <VerticalScroll size={10} before={1} thumb={433} after={17} />
      </SCViewport>
      <SCStatusBar>XY Translate Object Mode, move geometry parallel to screen</SCStatusBar>
    </SCWindow>
  );
}

export default App;
